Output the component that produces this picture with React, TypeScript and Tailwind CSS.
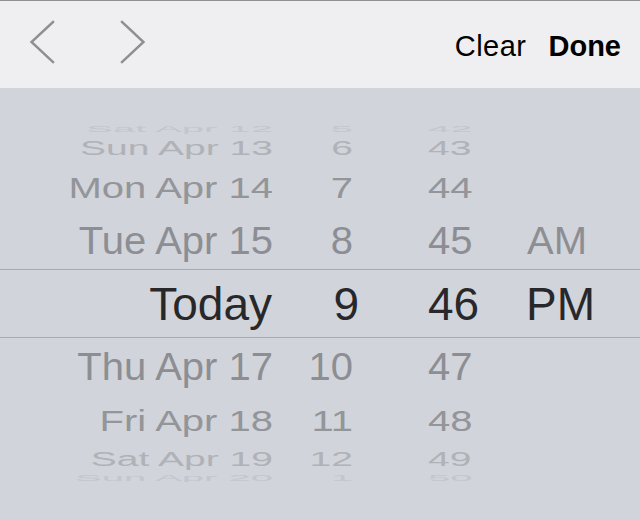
import React from "react";

type Row = {
  d: string;
  h: string;
  m: string;
  ap: string;
  box: string;
  inner: string;
};

const rows: Row[] = [
  { d: "Sat Apr 12", h: "5", m: "42", ap: "", box: "h-[12px] overflow-hidden", inner: "text-[40px] scale-y-[0.22] text-[#c3c6cb]" },
  { d: "Sun Apr 13", h: "6", m: "43", ap: "", box: "h-[26px]", inner: "text-[39px] scale-y-[0.5] text-[#b0b2b7]" },
  { d: "Mon Apr 14", h: "7", m: "44", ap: "", box: "h-[52px]", inner: "text-[40px] scale-y-[0.76] text-[#939599]" },
  { d: "Tue Apr 15", h: "8", m: "45", ap: "AM", box: "h-[56px]", inner: "text-[40px] scale-y-[0.95] text-[#8c8e93]" },
];

const rowsBelow: Row[] = [
  { d: "Thu Apr 17", h: "10", m: "47", ap: "", box: "h-[58px]", inner: "text-[40px] scale-y-[0.95] text-[#8c8e93]" },
  { d: "Fri Apr 18", h: "11", m: "48", ap: "", box: "h-[48px]", inner: "text-[40px] scale-y-[0.76] text-[#939599]" },
  { d: "Sat Apr 19", h: "12", m: "49", ap: "", box: "h-[30px]", inner: "text-[39px] scale-y-[0.5] text-[#b0b2b7]" },
  { d: "Sun Apr 20", h: "1", m: "50", ap: "", box: "h-[8px] overflow-hidden", inner: "text-[40px] scale-y-[0.22] text-[#c3c6cb]" },
];

function PickerRow({ r }: { r: Row }) {
  return (
    <div className={`flex items-center ${r.box}`}>
      <div className={`flex w-full shrink-0 items-center leading-none ${r.inner}`}>
        <span className="w-[273px] shrink-0 text-right">{r.d}</span>
        <span className="w-[80px] shrink-0 text-right">{r.h}</span>
        <span className="ml-[75px] w-[99px] shrink-0">{r.m}</span>
        <span className="shrink-0">{r.ap}</span>
      </div>
    </div>
  );
}

export default function App() {
  return (
    <div
      className="h-[520px] w-[640px] overflow-hidden bg-[#d1d4da]"
      style={{ fontFamily: '"Liberation Sans", Arial, sans-serif' }}
    >
      {/* Toolbar */}
      <div className="flex h-[88px] items-center border-t border-[#8e8e93] bg-[#efeff2]">
        <svg className="ml-[29px] -mt-[5px] shrink-0" width="26" height="44" viewBox="0 0 26 44" fill="none">
          <path d="M24 2 L2.5 22 L24 42" stroke="#8e8e93" strokeWidth="2.4" strokeLinecap="square" />
        </svg>
        <svg className="ml-[65px] -mt-[5px] shrink-0" width="26" height="44" viewBox="0 0 26 44" fill="none">
          <path d="M2 2 L23.5 22 L2 42" stroke="#8e8e93" strokeWidth="2.4" strokeLinecap="square" />
        </svg>
        <div className="ml-auto mt-[4px] flex items-center gap-[22px] pr-[19px] text-[29px] leading-none text-black">
          <span className="tracking-[0.5px]">Clear</span>
          <span className="font-bold">Done</span>
        </div>
      </div>

      {/* Picker */}
      <div className="flex flex-col pt-[35px]">
        {rows.map((r) => (
          <PickerRow key={r.d} r={r} />
        ))}
        <div className="flex h-[69px] items-center border-y border-[#a7aaaf]">
          <div className="flex w-full items-center text-[46px] leading-none text-[#28282a]">
            <span className="w-[272px] shrink-0 text-right">Today</span>
            <span className="w-[87px] shrink-0 text-right">9</span>
            <span className="ml-[69px] w-[98px] shrink-0">46</span>
            <span className="shrink-0">PM</span>
          </div>
        </div>
        {rowsBelow.map((r) => (
          <PickerRow key={r.d} r={r} />
        ))}
      </div>
    </div>
  );
}
